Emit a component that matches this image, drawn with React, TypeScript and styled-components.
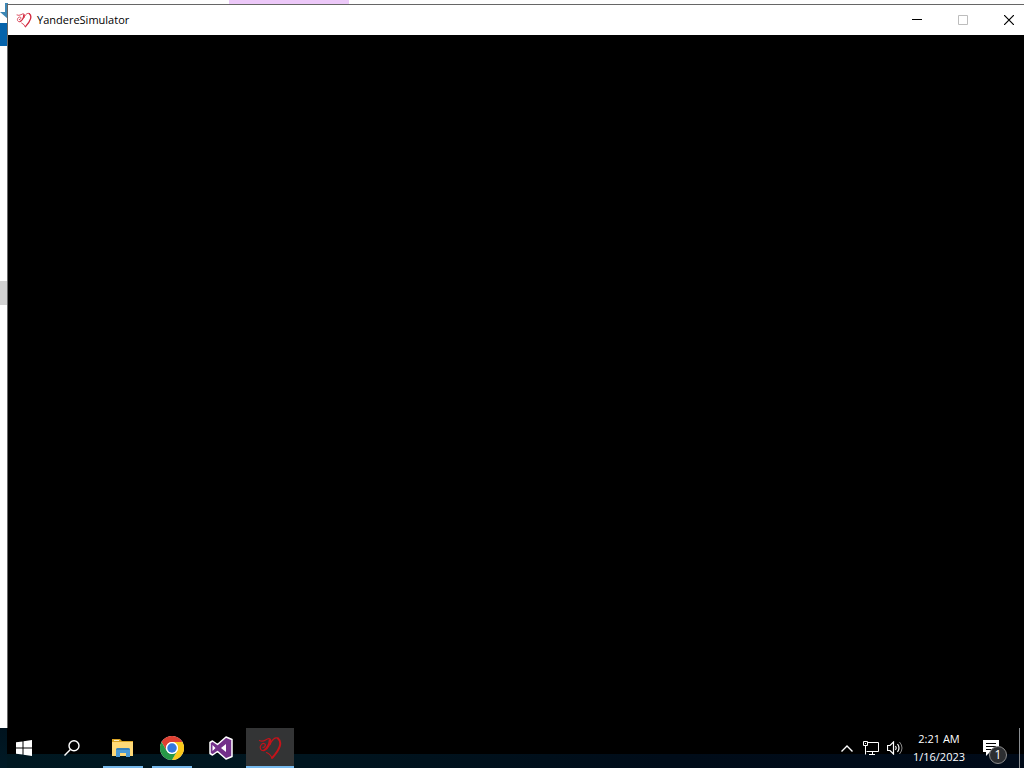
import React from "react";
import styled, { createGlobalStyle } from "styled-components";

const GlobalStyle = createGlobalStyle`
  * { box-sizing: border-box; }
  html, body, #root { height: 100%; }
  body {
    margin: 0;
    overflow: hidden;
    background: #fff;
    font-family: "Open Sans", "Noto Sans", sans-serif;
    font-size: 11px;
  }
  button { font: inherit; border: 0; padding: 0; background: none; color: inherit; }
  svg { display: block; flex: none; }
`;

const Desktop = styled.main`
  position: relative;
  height: 100vh;
  display: flex;
  flex-direction: column;
  background: #fefefe;
`;

const Workspace = styled.div`
  position: relative;
  flex: 1;
  min-height: 0;
`;

const BackgroundWindow = styled.div`
  height: 100%;
`;

const BackgroundTab = styled.div`
  width: 120px;
  height: 4px;
  margin-left: 229px;
  background: #ecc8f8;
`;

const RibbonEdge = styled.div`
  width: 8px;
  height: 23px;
  margin-top: 19px;
  background: #0563ab;
`;

const ScrollThumb = styled.div`
  width: 8px;
  height: 24px;
  margin-top: 235px;
  background: #d2d2d2;
`;

const ArrowMark = styled.svg`
  position: absolute;
  left: 0;
  top: 3px;
`;

const AppWindow = styled.section`
  position: absolute;
  left: 7px;
  top: 4px;
  right: 0;
  bottom: 0;
  display: flex;
  flex-direction: column;
  overflow: hidden;
  border: solid #666;
  border-width: 1px 0 0 1px;
`;

const TitleBar = styled.header`
  display: flex;
  align-items: center;
  height: 30px;
  padding-left: 8px;
  background: #fff;
`;

const Title = styled.h1`
  flex: 1;
  margin: 0 0 0 5px;
  font-size: 11px;
  font-weight: 400;
  line-height: 16px;
  color: #000;
`;

const WindowControls = styled.div`
  display: flex;
  flex: none;
  margin-right: -8px;
`;

const WindowButton = styled.button<{ $muted?: boolean }>`
  display: flex;
  align-items: center;
  justify-content: center;
  width: 46px;
  height: 30px;
  color: ${(p) => (p.$muted ? "#bdbdbd" : "#000")};
`;

const GameCanvas = styled.div`
  flex: 1;
  background: #000;
`;

const Taskbar = styled.footer`
  display: flex;
  flex: none;
  justify-content: space-between;
  height: 40px;
  color: #fff;
  background:
    linear-gradient(#00131e, #001a26) left / 7px 100% no-repeat,
    linear-gradient(#000, #000) top / 100% 26px no-repeat,
    linear-gradient(90deg, #001821, #00151f 30%, #000c19 65%, #000a18);
`;

const TaskGroup = styled.nav`
  display: flex;
`;

const Pinned = styled.div`
  display: flex;
  gap: 1px;
  margin-left: 3px;
`;

const TaskButton = styled.button<{ $state?: "open" | "active" }>`
  display: flex;
  align-items: center;
  justify-content: center;
  position: relative;
  width: 48px;
  height: 40px;
  background: ${(p) => (p.$state === "active" ? "#333435" : "transparent")};
  &::after {
    content: "";
    position: absolute;
    bottom: 0;
    left: ${(p) => (p.$state === "active" ? 0 : 4)}px;
    right: ${(p) => (p.$state === "active" ? 0 : 4)}px;
    height: ${(p) => (p.$state ? 2 : 0)}px;
    background: #76b9ed;
  }
`;

const Tray = styled.div`
  display: flex;
`;

const TrayButton = styled.button`
  display: flex;
  align-items: center;
  justify-content: center;
  width: 24px;
  height: 40px;
`;

const Clock = styled.button`
  width: 64px;
  height: 40px;
  padding-bottom: 1px;
  line-height: 18px;
  text-align: center;
  white-space: nowrap;
  span { display: block; }
`;

const ActionCenter = styled.button`
  display: flex;
  align-items: center;
  position: relative;
  width: 48px;
  height: 40px;
  padding-left: 12px;
`;

const Badge = styled.span`
  position: absolute;
  left: 18px;
  top: 18px;
  width: 18px;
  height: 18px;
  border: 1px solid #8b8b8b;
  border-radius: 50%;
  background: #2c2e31;
  font-size: 12px;
  line-height: 16px;
  text-align: center;
`;

const ShowDesktop = styled.button`
  width: 5px;
  height: 40px;
  border-left: 1px solid #8b8f93;
`;

const HeartLogo = ({ size, color }: { size: number; color: string }) => (
  <svg
    width={size}
    height={size}
    viewBox="0 0 24 24"
    fill="none"
    stroke={color}
    strokeLinecap="round"
    strokeLinejoin="round"
    aria-hidden="true"
  >
    <path strokeWidth="1.200" d="M1.500 4.500Q4.500 6 7.500 4Q11 1.500 12.500 3.500C13.500 6 10 13 6.500 14.500C3 15.500.8 12 3 9C4.500 6.800 7.800 7 7.300 9.500Q6.800 11.500 5 11.500" />
    <path strokeWidth="1.600" d="M11.500 4C11.500 8 9 12.500 6 14.200" />
    <path strokeWidth="1.300" d="M12 8.500C13.500 4 17 .800 20 2.200" />
    <path strokeWidth="2" d="M20 2.500C24.500 6 22 13.500 14.500 21.500" />
    <path strokeWidth="1.200" d="M14 22.500Q13 18.500 8.500 16.500" />
  </svg>
);

const StartIcon = () => (
  <svg width="16" height="16" viewBox="0 0 16 16" fill="#fff" aria-hidden="true">
    <path d="M0 2.300 6.500 1.400V7.500H0zM7.500 1.200 16 0V7.500H7.500zM0 8.500H6.500V14.600L0 13.700zM7.500 8.500H16V16L7.500 14.800z" />
  </svg>
);

const SearchIcon = () => (
  <svg width="16" height="16" viewBox="0 0 16 16" fill="none" stroke="#fff" strokeWidth="1.400" aria-hidden="true">
    <circle cx="10" cy="5.800" r="5" />
    <path d="M6.400 9.400.5 15.400" />
  </svg>
);

const FolderIcon = () => (
  <svg width="22" height="20" viewBox="0 0 22 20" aria-hidden="true">
    <path d="M0 1h8l2 2h11v5H0z" fill="#d9a425" />
    <path d="M2 2h5v1H2z" fill="#f7edcc" />
    <path d="M0 4h21v14H0z" fill="#ffd977" />
    <path d="M4 19v-7q0-2 2-2h10q2 0 2 2v7h-4v-4H8v4z" fill="#4b9ad5" />
    <path d="M4 12q0-2 2-2h10q2 0 2 2z" fill="#3781bb" />
  </svg>
);

const ChromeIcon = () => (
  <svg width="24" height="24" viewBox="0 0 48 48" aria-hidden="true">
    <circle cx="24" cy="24" r="24" fill="#fff" />
    <path d="M3.200 12A24 24 0 0 1 44.800 12H24A12 12 0 0 0 13.600 30z" fill="#df4032" />
    <path d="M44.800 12A24 24 0 0 1 24 48L34.400 30A12 12 0 0 0 24 12z" fill="#fbc91c" />
    <path d="M24 48A24 24 0 0 1 3.200 12L13.600 30A12 12 0 0 0 34.400 30z" fill="#279847" />
    <circle cx="24" cy="24" r="12" fill="#fff" />
    <circle cx="24" cy="24" r="9.500" fill="#3478df" />
  </svg>
);

const VisualStudioIcon = () => (
  <svg width="24" height="24" viewBox="0 0 24 24" aria-hidden="true">
    <path
      d="M17 1 23 3.500V20.500L17 23 8.500 15.500 3.500 19 1 17.500V6.500L3.500 5 8.500 8.500z"
      fill="#73308a"
      stroke="#fff"
      strokeWidth="1.500"
      strokeLinejoin="round"
    />
    <path d="M17 8 12 12 17 16zM3.500 9V15L6.500 12z" fill="#fff" />
  </svg>
);

const NetworkIcon = () => (
  <svg width="16" height="14" viewBox="0 0 16 14" fill="none" stroke="#fff" aria-hidden="true">
    <path d="M5 1.500H15.500V10.500H3.500M.5.500H4.500V4.500H.5zM2.500 4.500V13.500M9.500 10.500V13M6 13.500H12" />
    <path d="M2 2.500H3" />
  </svg>
);

const SpeakerIcon = () => (
  <svg width="16" height="14" viewBox="0 0 16 14" fill="none" stroke="#fff" aria-hidden="true">
    <path strokeWidth="1.200" d="M.5 4.500H3L6.500 1V13L3 9.500H.5z" />
    <path strokeWidth="1.200" d="M8.500 5q1.500 2 0 4M10.500 3q3 4 0 8" />
    <path d="M12.500 1q5 6 0 12" stroke="#8c8c8c" />
  </svg>
);

export default function App() {
  return (
    <>
      <GlobalStyle />
      <Desktop>
        <Workspace>
          <BackgroundWindow>
            <BackgroundTab />
            <RibbonEdge />
            <ScrollThumb />
            <ArrowMark width="8" height="16" viewBox="0 0 8 16" aria-hidden="true">
              <path d="M5 0H8V16L0 9H5z" fill="#3d87b5" />
            </ArrowMark>
          </BackgroundWindow>
          <AppWindow>
            <TitleBar>
              <HeartLogo size={16} color="#d3283f" />
              <Title>YandereSimulator</Title>
              <WindowControls>
                <WindowButton aria-label="Minimize">
                  <svg width="10" height="10" stroke="currentColor"><path d="M0 4.500H10" /></svg>
                </WindowButton>
                <WindowButton aria-label="Maximize" $muted disabled>
                  <svg width="10" height="10" fill="none" stroke="currentColor"><path d="M.5.500H9.500V9.500H.5z" /></svg>
                </WindowButton>
                <WindowButton aria-label="Close">
                  <svg width="10" height="10" stroke="currentColor" strokeWidth="1.200"><path d="M0 0 10 10M10 0 0 10" /></svg>
                </WindowButton>
              </WindowControls>
            </TitleBar>
            <GameCanvas />
          </AppWindow>
        </Workspace>
        <Taskbar>
          <TaskGroup aria-label="Taskbar">
            <TaskButton aria-label="Start"><StartIcon /></TaskButton>
            <TaskButton aria-label="Search"><SearchIcon /></TaskButton>
            <Pinned>
              <TaskButton aria-label="File Explorer" $state="open"><FolderIcon /></TaskButton>
              <TaskButton aria-label="Google Chrome" $state="open"><ChromeIcon /></TaskButton>
              <TaskButton aria-label="Visual Studio"><VisualStudioIcon /></TaskButton>
              <TaskButton aria-label="YandereSimulator" $state="active"><HeartLogo size={24} color="#c5131a" /></TaskButton>
            </Pinned>
          </TaskGroup>
          <Tray>
            <TrayButton aria-label="Show hidden icons">
              <svg width="12" height="7" fill="none" stroke="#fff" strokeWidth="1.400"><path d="M.5 6.500 6 1 11.500 6.500" /></svg>
            </TrayButton>
            <TrayButton aria-label="Network"><NetworkIcon /></TrayButton>
            <TrayButton aria-label="Volume"><SpeakerIcon /></TrayButton>
            <Clock>
              <span>2:21 AM</span>
              <span>1/16/2023</span>
            </Clock>
            <ActionCenter aria-label="Notifications">
              <svg width="16" height="16" viewBox="0 0 16 16" aria-hidden="true">
                <path d="M0 0H16V12H7L3 16V12H0z" fill="#fff" />
                <path d="M3 3.500H13M3 6.500H13M3 9.500H10" stroke="#000" />
              </svg>
              <Badge>1</Badge>
            </ActionCenter>
            <ShowDesktop aria-label="Show desktop" />
          </Tray>
        </Taskbar>
      </Desktop>
    </>
  );
}
